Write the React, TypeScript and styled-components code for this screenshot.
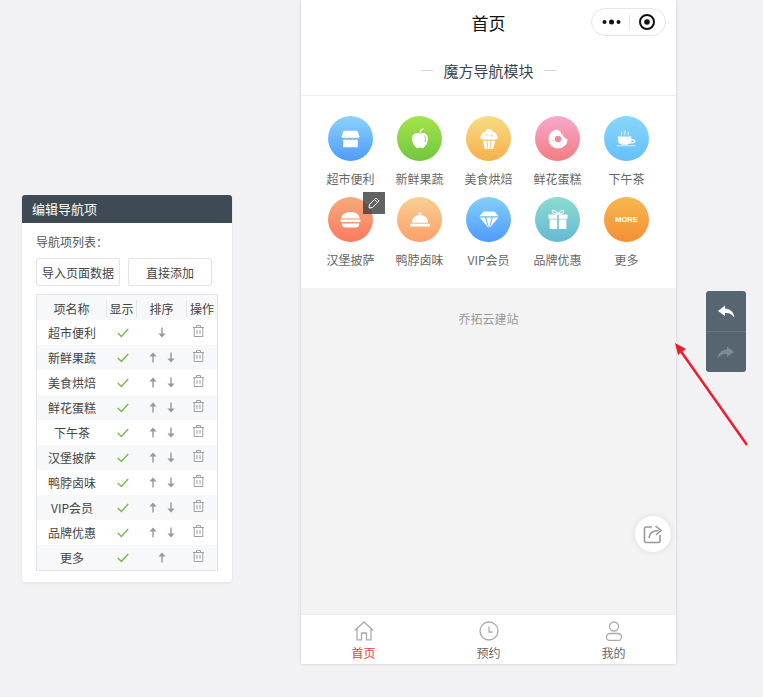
import React from "react";
import styled, { createGlobalStyle } from "styled-components";

const GlobalStyle = createGlobalStyle`
  html, body {
    margin: 0;
    padding: 0;
    background: #f2f2f5;
    font-family: "Noto Sans CJK SC", "Liberation Sans", sans-serif;
  }
`;

const Page = styled.div`
  position: relative;
  width: 763px;
  height: 697px;
  display: flex;
  align-items: flex-start;
  overflow: hidden;
`;

const Panel = styled.section`
  width: 210px;
  margin: 195px 0 0 22px;
  background: #fff;
  border-radius: 3px;
  box-shadow: 0 1px 3px rgba(0, 0, 0, 0.08);
  overflow: hidden;
`;

const PanelHeader = styled.h2`
  margin: 0;
  height: 28px;
  padding-left: 10px;
  background: #3e4a54;
  color: #fff;
  font-size: 13px;
  font-weight: 400;
  line-height: 28px;
`;

const PanelBody = styled.div`
  padding: 10px 14px 11px;
`;

const ListLabel = styled.div`
  height: 25px;
  font-size: 12px;
  line-height: 18px;
  color: #555;
`;

const ButtonRow = styled.div`
  display: flex;
  gap: 8px;
  margin-bottom: 8px;
`;

const PlainButton = styled.button`
  width: 84px;
  height: 28px;
  padding: 0;
  background: #fff;
  border: 1px solid #e3e5ea;
  border-radius: 2px;
  color: #444;
  font-family: inherit;
  font-size: 12px;
`;

const ItemTable = styled.div`
  width: 182px;
  box-sizing: border-box;
  border: 1px solid #e1e3e8;
`;

const Row = styled.div<{ $striped?: boolean }>`
  display: grid;
  grid-template-columns: 69px 30px 50px 31px;
  height: 25px;
  align-items: center;
  background: ${(p) => (p.$striped ? "#f7f8fa" : "#fff")};
  color: #444;
  font-size: 12px;
  text-align: center;
`;

const HeadCell = styled.div<{ $divider?: boolean }>`
  height: 17px;
  line-height: 17px;
  margin-top: 2px;
  border-left: ${(p) => (p.$divider ? "1px solid #e3e5ea" : "none")};
`;

const NameCell = styled.div`
  margin-top: -1px;
  padding-left: 1px;
`;

const CheckCell = styled.div`
  display: flex;
  justify-content: center;
  padding-left: 3px;
`;

const SortCell = styled.div`
  display: flex;
  justify-content: center;
  gap: 10px;
  padding-left: 2px;
`;

const TrashCell = styled.div`
  display: flex;
  justify-content: center;
  padding-right: 6px;
  margin-top: -3px;
`;

const Phone = styled.main`
  width: 375px;
  height: 664px;
  margin-left: 69px;
  display: flex;
  flex-direction: column;
  position: relative;
  background: #f3f3f4;
  box-shadow: 0 0 3px rgba(0, 0, 0, 0.16);
`;

const TopBar = styled.header`
  height: 46px;
  position: relative;
  background: #fff;
  text-align: center;
  color: #111;
  font-size: 17px;
  line-height: 45px;
`;

const Capsule = styled.div`
  position: absolute;
  top: 8px;
  right: 10px;
  width: 75px;
  height: 28px;
  box-sizing: border-box;
  border: 1px solid #e5e5e5;
  border-radius: 14px;
  display: flex;
  align-items: center;
  justify-content: space-between;
  padding: 0 10px;
`;

const CapsuleDivider = styled.span`
  width: 1px;
  height: 16px;
  margin-left: -1px;
  background: #e5e5e5;
`;

const ModuleTitle = styled.div`
  height: 50px;
  display: flex;
  align-items: center;
  justify-content: center;
  gap: 10px;
  background: #fff;
  border-bottom: 1px solid #eeeeee;
  color: #3a4450;
  font-size: 15px;
  box-sizing: border-box;
`;

const TitleDash = styled.span`
  width: 12px;
  height: 1px;
  background: #d4d4d4;
`;

const NavGrid = styled.div`
  display: grid;
  grid-template-columns: repeat(5, 69px);
  grid-auto-rows: 81px;
  height: 192px;
  box-sizing: border-box;
  padding: 20px 15px 0;
  background: #fff;
`;

const NavItem = styled.div`
  position: relative;
  display: flex;
  flex-direction: column;
  align-items: center;
  color: #666;
  font-size: 12px;
`;

const Bubble = styled.div<{ $from: string; $to: string }>`
  width: 45px;
  height: 45px;
  border-radius: 50%;
  display: flex;
  align-items: center;
  justify-content: center;
  background: linear-gradient(${(p) => p.$from}, ${(p) => p.$to});
  margin-bottom: 9px;
`;

const MoreText = styled.span`
  color: #fff;
  font-family: "Liberation Sans", sans-serif;
  font-size: 7.5px;
  font-weight: 700;
`;

const NavLabel = styled.span`
  line-height: 18px;
`;

const EditBadge = styled.div`
  position: absolute;
  top: -5px;
  left: 47px;
  width: 22px;
  height: 22px;
  display: flex;
  align-items: center;
  justify-content: center;
  background: rgba(60, 60, 60, 0.8);
`;

const Canvas = styled.div`
  flex: 1;
  text-align: center;
  color: #999;
  font-size: 12px;
  padding-top: 22px;
`;

const ShareFloat = styled.div`
  position: absolute;
  top: 516px;
  right: 5px;
  width: 36px;
  height: 36px;
  border-radius: 50%;
  background: #fff;
  box-shadow: 0 0 6px rgba(0, 0, 0, 0.1);
  display: flex;
  align-items: center;
  justify-content: center;
`;

const TabBar = styled.nav`
  height: 50px;
  display: grid;
  grid-template-columns: repeat(3, 1fr);
  background: #fff;
  border-top: 1px solid #eeeeee;
  box-sizing: border-box;
`;

const Tab = styled.div<{ $active?: boolean }>`
  display: flex;
  flex-direction: column;
  align-items: center;
  gap: 4px;
  padding-top: 6px;
  color: ${(p) => (p.$active ? "#e6423c" : "#666")};
  font-size: 12px;
  line-height: 16px;
`;

const HistoryBar = styled.aside`
  width: 40px;
  height: 81px;
  margin: 291px 0 0 30px;
  border-radius: 3px;
  background: #56656f;
  display: flex;
  flex-direction: column;
`;

const HistoryButton = styled.div<{ $divider?: boolean; $mirror?: boolean }>`
  flex: 1;
  display: flex;
  align-items: center;
  justify-content: center;
  border-top: ${(p) => (p.$divider ? "1px solid #6b7882" : "none")};
  transform: ${(p) => (p.$mirror ? "scaleX(-1)" : "none")};
`;

const ArrowOverlay = styled.svg`
  position: absolute;
  left: 0;
  top: 0;
  pointer-events: none;
`;

const SortArrow = styled.svg<{ $down?: boolean }>`
  transform: ${(p) => (p.$down ? "rotate(180deg)" : "none")};
`;

const ArrowIcon = ({ down }: { down?: boolean }) => (
  <SortArrow $down={down} width="8" height="11" viewBox="0 0 8 11">
    <path d="M4 0.5 L7.6 4.6 H4.7 V10.5 H3.3 V4.6 H0.4 Z" fill="#999" />
  </SortArrow>
);

const CheckIcon = () => (
  <svg width="12" height="10" viewBox="0 0 12 10">
    <path d="M0.8 5 L4.4 8.4 L11.2 1" fill="none" stroke="#7ab94a" strokeWidth="1.4" />
  </svg>
);

const TrashIcon = () => (
  <svg width="11" height="12" viewBox="0 0 11 12" fill="none" stroke="#a0a0a0" strokeWidth="1">
    <path d="M0 2.5 H11 M3.5 2.5 V0.5 H7.5 V2.5 M1.2 2.5 V11.5 H9.8 V2.5 M4 5 V9 M7 5 V9" />
  </svg>
);

const StoreIcon = () => (
  <svg width="21" height="20" viewBox="0 0 22 22" fill="#fff">
    <path d="M3.5 2 H18.5 L21 8.5 Q19.2 11 17 9.3 Q15 11 13 9.3 Q11 11 9 9.3 Q7 11 5 9.3 Q2.8 11 1 8.5 Z" />
    <path d="M3 11.5 Q4.2 12 5 11.3 Q7 13 9 11.3 Q11 13 13 11.3 Q15 13 17 11.3 Q18 12 19 11.5 V20 H3 Z" />
  </svg>
);

const AppleIcon = () => (
  <svg width="20" height="21" viewBox="0 0 22 24" fill="#fff">
    <path d="M11 6.5 C8 4.5 2 5.5 2 12 C2 18 6 23 8.5 23 C9.5 23 10 22.3 11 22.3 C12 22.3 12.5 23 13.5 23 C16 23 20 18 20 12 C20 5.5 14 4.5 11 6.5 Z" />
    <path d="M11 6 C11 3.5 12.5 1.5 15 1" fill="none" stroke="#fff" strokeWidth="1.3" />
    <path d="M16 9.5 C17.5 11 17.5 14 16.5 16" fill="none" stroke="#a6dc55" strokeWidth="1.2" />
  </svg>
);

const MuffinIcon = () => (
  <svg width="20" height="22" viewBox="0 0 24 26" fill="#fff">
    <path d="M12 1 C15 1 16.5 3 16.8 4.5 C19.5 4.5 21.5 6.5 21.5 9 C23 10.5 22.5 13.5 20 13.5 H4 C1.5 13.5 1 10.5 2.5 9 C2.5 6.5 4.5 4.5 7.2 4.5 C7.5 3 9 1 12 1 Z" />
    <path d="M4.5 15 H9 L10 25 H7 Z M10.3 15 H13.7 L13.3 25 H10.7 Z M15 15 H19.5 L17 25 H14 Z" />
    <circle cx="9" cy="8" r="1" fill="#f7cb68" />
    <circle cx="15" cy="9" r="1" fill="#f7cb68" />
  </svg>
);

const DonutIcon = () => (
  <svg width="20" height="20" viewBox="0 0 26 26">
    <path fillRule="evenodd" fill="#fff" d="M13 0.5 A12.5 12.5 0 1 0 25.5 13 C24 13.5 22.5 12.5 22.3 11 C20.5 11 19 9.5 19.5 7.5 C17.5 7.5 16 5.500 16.8 3.5 C15 3.5 13.5 2 13 0.5 Z M13 9 A4 4 0 1 1 13 17 A4 4 0 1 1 13 9 Z" />
    <circle cx="13" cy="13" r="4" fill="#f38a99" />
    <path d="M7 9 l1 1 M6 15 l1.3 0 M10 20 l1 -1 M16 20 l1 1 M19 15 l1 1" stroke="#f4a0ad" strokeWidth="1" />
  </svg>
);

const TeaIcon = () => (
  <svg width="21" height="17" viewBox="0 0 22 22" preserveAspectRatio="none" fill="#fff">
    <path d="M2 8.5 H16 V12 H17.5 C21.5 12 21.5 17.5 17 17.5 H14.5 C13.5 18.5 12.5 19 11 19 H7 C4 19 2 16 2 13 Z M16 13.5 V16 H17.5 C19.5 16 19.5 13.5 17.5 13.5 Z" fillRule="evenodd" />
    <rect x="0.5" y="20" width="20" height="1" />
    <path d="M6 7 C4.5 5.5 7 4.5 6 2.5 M9.5 7 C8 5 10.5 3.5 9.5 0.5 M13 7 C11.5 5.5 14 4.5 13 2.5" fill="none" stroke="#fff" strokeWidth="1" />
  </svg>
);

const BurgerIcon = () => (
  <svg width="21" height="16" viewBox="0 0 22 20" preserveAspectRatio="none" fill="#fff">
    <path d="M1.5 8 C1.5 3 6 0 11 0 C16 0 20.5 3 20.5 8 Z" />
    <path d="M0.5 9.5 H21.5 V12 Q19.5 13.5 17.5 12.3 Q15.5 13.5 13.5 12.3 Q11 13.5 8.5 12.3 Q6.5 13.5 4.5 12.3 Q2.5 13.5 0.5 12 Z" />
    <path d="M2 14.5 H20 V16 C20 18 18.5 19.5 16.5 19.5 H5.5 C3.5 19.5 2 18 2 16 Z" />
  </svg>
);

const DishIcon = () => (
  <svg width="20" height="15" viewBox="0 0 22 18" preserveAspectRatio="none" fill="#fff">
    <circle cx="11" cy="1.8" r="1.5" />
    <path d="M2 13 C2 7 6 3.5 11 3.5 C16 3.5 20 7 20 13 Z" />
    <rect x="0" y="14" width="22" height="3.5" rx="1" />
  </svg>
);

const DiamondIcon = () => (
  <svg width="20" height="18" viewBox="0 0 26 22" preserveAspectRatio="none" fill="#fff">
    <path d="M6 0.5 H20 L25.5 6.5 H0.5 Z" />
    <path d="M0.8 8 H8 L12 20.5 Z M9.5 8 H16.5 L13 21 Z M18 8 H25.2 L14 20.5 Z" />
  </svg>
);

const GiftIcon = () => (
  <svg width="20" height="21" viewBox="0 0 24 25" fill="#fff">
    <path d="M12 6 C9 1 5 0.5 5 3 C5 5 8 6 12 6 C16 6 19 5 19 3 C19 0.5 15 1 12 6 Z" fill="none" stroke="#fff" strokeWidth="1.3" />
    <path d="M0.5 6.5 H11 V11.5 H0.5 Z M13 6.5 H23.5 V11.5 H13 Z M2 12.5 H11 V24 H2 Z M13 12.5 H22 V24 H13 Z" />
  </svg>
);

const PencilIcon = () => (
  <svg width="12" height="12" viewBox="0 0 12 12" fill="none" stroke="#fff" strokeWidth="1">
    <path d="M8 1 L11 4 L4.5 10.5 L1 11 L1.5 7.5 Z M6.5 2.5 L9.5 5.5" />
  </svg>
);

const DotsIcon = () => (
  <svg width="19" height="6" viewBox="0 0 19 6" fill="#111">
    <circle cx="2.5" cy="3" r="2" />
    <circle cx="9.5" cy="3" r="2.5" />
    <circle cx="16.5" cy="3" r="2" />
  </svg>
);

const TargetIcon = () => (
  <svg width="16" height="16" viewBox="0 0 16 16">
    <circle cx="8" cy="8" r="7" fill="none" stroke="#111" strokeWidth="2" />
    <circle cx="8" cy="8" r="2.8" fill="#111" />
  </svg>
);

const HomeIcon = () => (
  <svg width="20" height="20" viewBox="0 0 20 20" fill="none" stroke="#aaa" strokeWidth="1.3">
    <path d="M0.8 9.5 L10 1 L19.2 9.5 M3 8 V18.8 H7.5 V12 H12.5 V18.8 H17 V8" />
  </svg>
);

const ClockIcon = () => (
  <svg width="20" height="20" viewBox="0 0 20 20" fill="none" stroke="#aaa" strokeWidth="1.3">
    <circle cx="10" cy="10" r="9" />
    <path d="M10 5.5 V11 H13.5" />
  </svg>
);

const UserIcon = () => (
  <svg width="20" height="20" viewBox="0 0 20 20" fill="none" stroke="#aaa" strokeWidth="1.3">
    <circle cx="10" cy="5.5" r="4.5" />
    <rect x="2.5" y="12.5" width="15" height="7" rx="3.5" />
  </svg>
);

const ShareIcon = () => (
  <svg width="20" height="20" viewBox="0 0 20 20" fill="none" stroke="#999" strokeWidth="1.6">
    <path d="M9 3 H3 C2 3 1.5 3.5 1.5 4.5 V17 C1.5 18 2 18.5 3 18.5 H15.5 C16.5 18.5 17 18 17 17 V11" />
    <path d="M6 14 C6.5 9 10 6.5 15.5 6.5 M12.5 2 L18 6.5 L13 11" />
  </svg>
);

const UndoIcon = ({ color }: { color: string }) => (
  <svg width="17" height="13" viewBox="0 0 17 13">
    <path d="M7 0.5 L0 6 L7 11 V8 C11 7.5 14 9 16.5 12.8 C16 7.5 12.5 3.8 7 3.5 Z" fill={color} />
  </svg>
);

const navItems = [
  { label: "超市便利", from: "#8cd2fb", to: "#4f9bfd", icon: <StoreIcon /> },
  { label: "新鲜果蔬", from: "#a5e34a", to: "#72c640", icon: <AppleIcon /> },
  { label: "美食烘焙", from: "#f8dc82", to: "#f5b04d", icon: <MuffinIcon /> },
  { label: "鲜花蛋糕", from: "#f5a9cf", to: "#f47c80", icon: <DonutIcon /> },
  { label: "下午茶", from: "#8ad6fb", to: "#64bffa", icon: <TeaIcon /> },
  { label: "汉堡披萨", from: "#f5aa7c", to: "#fe7a60", icon: <BurgerIcon />, editing: true },
  { label: "鸭脖卤味", from: "#f8cf92", to: "#fd9f6a", icon: <DishIcon /> },
  { label: "VIP会员", from: "#85cffb", to: "#4d9afe", icon: <DiamondIcon /> },
  { label: "品牌优惠", from: "#8adcd0", to: "#66b9d6", icon: <GiftIcon /> },
  { label: "更多", from: "#f6b84e", to: "#f58f37", icon: <MoreText>MORE</MoreText> },
];

const App = () => (
  <Page>
    <GlobalStyle />
    <Panel>
      <PanelHeader>编辑导航项</PanelHeader>
      <PanelBody>
        <ListLabel>导航项列表：</ListLabel>
        <ButtonRow>
          <PlainButton>导入页面数据</PlainButton>
          <PlainButton>直接添加</PlainButton>
        </ButtonRow>
        <ItemTable>
          <Row $striped>
            <HeadCell>项名称</HeadCell>
            <HeadCell $divider>显示</HeadCell>
            <HeadCell $divider>排序</HeadCell>
            <HeadCell $divider>操作</HeadCell>
          </Row>
          {navItems.map((item, i) => (
            <Row key={item.label} $striped={i % 2 === 1}>
              <NameCell>{item.label}</NameCell>
              <CheckCell>
                <CheckIcon />
              </CheckCell>
              <SortCell>
                {i > 0 && <ArrowIcon />}
                {i < navItems.length - 1 && <ArrowIcon down />}
              </SortCell>
              <TrashCell>
                <TrashIcon />
              </TrashCell>
            </Row>
          ))}
        </ItemTable>
      </PanelBody>
    </Panel>

    <Phone>
      <TopBar>
        首页
        <Capsule>
          <DotsIcon />
          <CapsuleDivider />
          <TargetIcon />
        </Capsule>
      </TopBar>
      <ModuleTitle>
        <TitleDash />
        魔方导航模块
        <TitleDash />
      </ModuleTitle>
      <NavGrid>
        {navItems.map((item) => (
          <NavItem key={item.label}>
            <Bubble $from={item.from} $to={item.to}>
              {item.icon}
            </Bubble>
            <NavLabel>{item.label}</NavLabel>
            {item.editing && (
              <EditBadge>
                <PencilIcon />
              </EditBadge>
            )}
          </NavItem>
        ))}
      </NavGrid>
      <Canvas>乔拓云建站</Canvas>
      <ShareFloat>
        <ShareIcon />
      </ShareFloat>
      <TabBar>
        <Tab $active>
          <HomeIcon />
          首页
        </Tab>
        <Tab>
          <ClockIcon />
          预约
        </Tab>
        <Tab>
          <UserIcon />
          我的
        </Tab>
      </TabBar>
    </Phone>

    <HistoryBar>
      <HistoryButton>
        <UndoIcon color="#fff" />
      </HistoryButton>
      <HistoryButton $divider $mirror>
        <UndoIcon color="#7c8a93" />
      </HistoryButton>
    </HistoryBar>

    <ArrowOverlay width="763" height="697" viewBox="0 0 763 697">
      <path d="M747 445 L680 350" stroke="#ee1c2e" strokeWidth="2.5" fill="none" />
      <path d="M675 343 L686 349 L678 355 Z" fill="#ee1c2e" />
    </ArrowOverlay>
  </Page>
);

export default App;
